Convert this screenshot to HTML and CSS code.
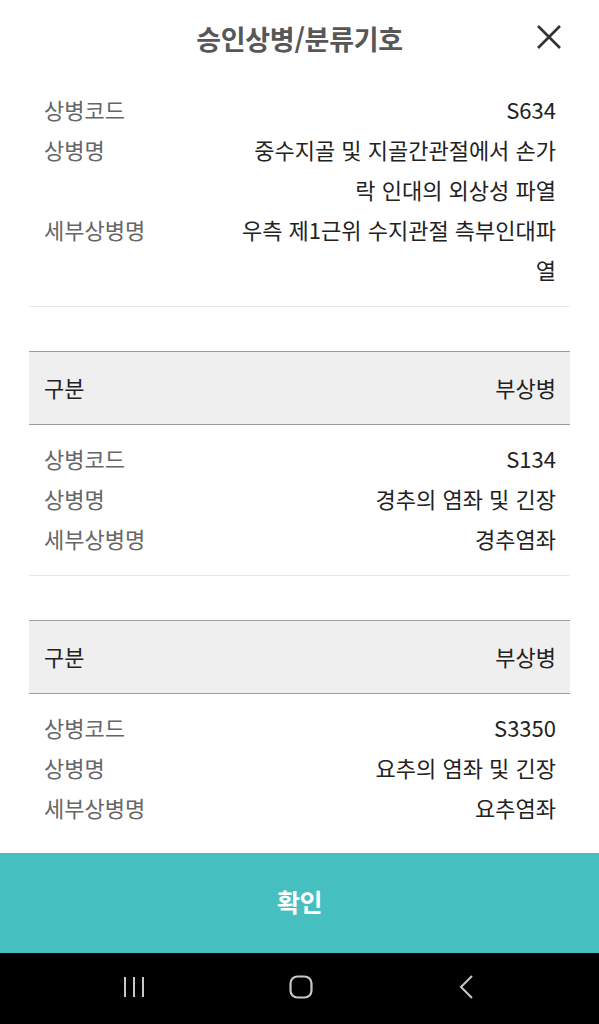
FILE: index.html
```html
<!DOCTYPE html>
<html lang="ko">
<head>
<meta charset="utf-8">
<title>승인상병/분류기호</title>
<link rel="stylesheet" href="styles.css">
</head>
<body>
<div class="app">
  <header class="top">
    <h1 class="title">승인상병/분류기호</h1>
    <button class="close" aria-label="닫기">
      <svg width="26" height="26" viewBox="0 0 26 26"><path d="M2 2 L24 24 M24 2 L2 24" stroke="#333" stroke-width="2.6" fill="none"/></svg>
    </button>
  </header>
  <main class="content">
    <section class="section first">
      <div class="rows">
        <div class="row"><span class="label">상병코드</span><span class="value">S634</span></div>
        <div class="row"><span class="label">상병명</span><span class="value">중수지골 및 지골간관절에서 손가락 인대의 외상성 파열</span></div>
        <div class="row"><span class="label">세부상병명</span><span class="value">우측 제1근위 수지관절 측부인대파열</span></div>
      </div>
    </section>
    <section class="section">
      <div class="cat"><span>구분</span><span>부상병</span></div>
      <div class="rows">
        <div class="row"><span class="label">상병코드</span><span class="value">S134</span></div>
        <div class="row"><span class="label">상병명</span><span class="value">경추의 염좌 및 긴장</span></div>
        <div class="row"><span class="label">세부상병명</span><span class="value">경추염좌</span></div>
      </div>
    </section>
    <section class="section last">
      <div class="cat"><span>구분</span><span>부상병</span></div>
      <div class="rows">
        <div class="row"><span class="label">상병코드</span><span class="value">S3350</span></div>
        <div class="row"><span class="label">상병명</span><span class="value">요추의 염좌 및 긴장</span></div>
        <div class="row"><span class="label">세부상병명</span><span class="value">요추염좌</span></div>
      </div>
    </section>
  </main>
  <button class="confirm">확인</button>
  <nav class="navbar">
    <svg class="nav-icon" width="24" height="24" viewBox="0 0 24 24"><path d="M3 2 V22 M12 2 V22 M21 2 V22" stroke="#c8c8c8" stroke-width="2" fill="none"/></svg>
    <svg class="nav-icon" width="24" height="24" viewBox="0 0 24 24"><rect x="1.5" y="1.5" width="21" height="21" rx="7" stroke="#c8c8c8" stroke-width="2.2" fill="none"/></svg>
    <svg class="nav-icon" width="24" height="26" viewBox="0 0 24 26"><path d="M17 2 L6 13 L17 24" stroke="#c8c8c8" stroke-width="2" fill="none"/></svg>
  </nav>
</div>
</body>
</html>
```
FILE: styles.css
```css
* { box-sizing: border-box; }
html, body { margin: 0; padding: 0; }
body {
  font-family: "Noto Sans CJK KR", "Noto Sans", sans-serif;
  background: #fff;
}
.app {
  width: 599px;
  height: 1024px;
  display: flex;
  flex-direction: column;
  overflow: hidden;
}
.top {
  position: relative;
  height: 76px;
  flex: none;
  display: flex;
  align-items: center;
  justify-content: center;
}
.title {
  margin: 0;
  font-size: 27px;
  font-weight: 700;
  color: #575757;
  letter-spacing: -0.3px;
  line-height: 1;
}
.close {
  position: absolute;
  right: 37px;
  top: 24px;
  width: 26px;
  height: 26px;
  padding: 0;
  border: 0;
  background: none;
}
.close svg { display: block; }
.content {
  flex: 1;
  padding: 0 29px;
  overflow: hidden;
}
.section {
  border-bottom: 1px solid #e8e8e8;
  padding-bottom: 17px;
  margin-bottom: 44px;
}
.section.last { border-bottom: 0; }
.cat {
  height: 74px;
  border-top: 1px solid #9d9d9d;
  border-bottom: 1px solid #9d9d9d;
  background: #efefef;
  display: flex;
  align-items: center;
  justify-content: space-between;
  padding: 0 14px 2px 15px;
  font-size: 22px;
  color: #222;
}
.rows { padding-top: 13px; }
.row {
  display: grid;
  grid-template-columns: 1fr 318px;
  padding: 0 14px 0 15px;
  font-size: 22px;
  line-height: 40px;
}
.label { color: #666; }
.value { color: #222; text-align: right; }
.confirm {
  flex: none;
  height: 100px;
  border: 0;
  margin: 0;
  width: 100%;
  background: #45bfc0;
  color: #fff;
  font-family: "Noto Sans CJK KR", "Noto Sans", sans-serif;
  font-size: 25px;
  font-weight: 700;
  letter-spacing: -0.5px;
  padding: 0 0 4px;
}
.navbar {
  flex: none;
  height: 71px;
  background: #000;
  display: flex;
  align-items: center;
  justify-content: space-between;
  padding: 0 120px 4px 122px;
}
.nav-icon { display: block; }
```
